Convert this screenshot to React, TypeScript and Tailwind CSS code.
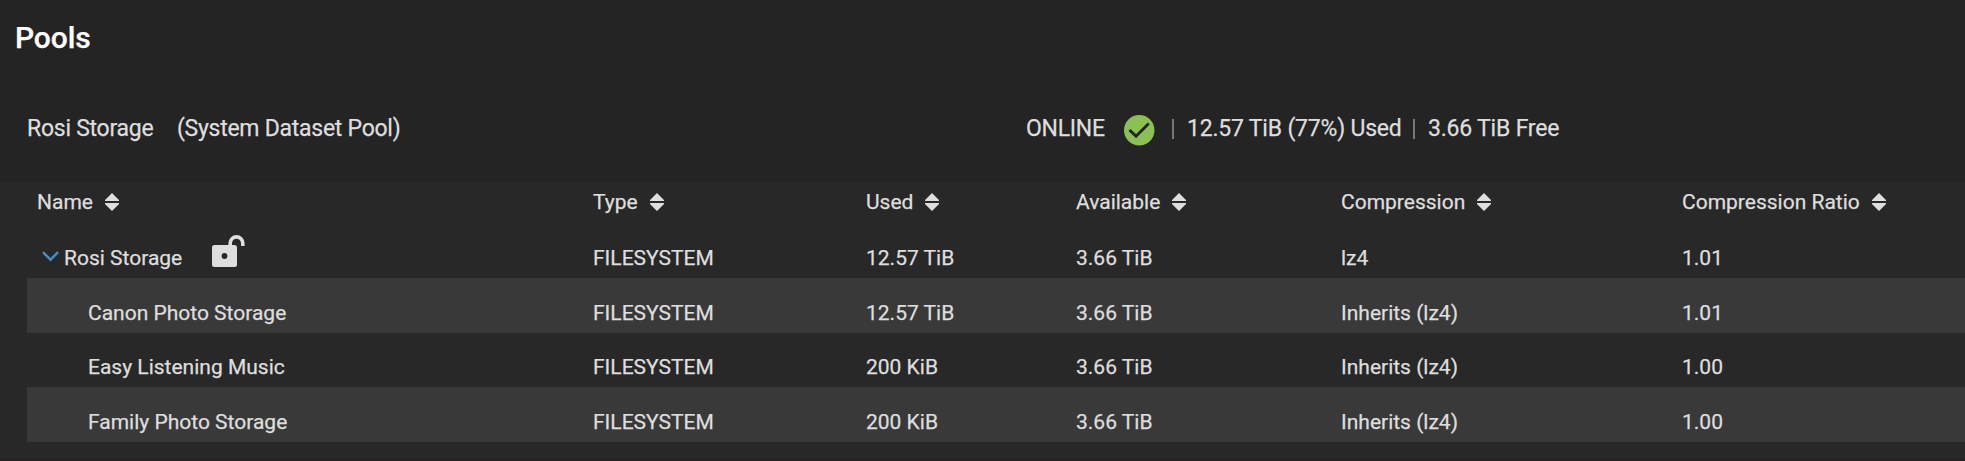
import React from "react";

const columns = ["Name", "Type", "Used", "Available", "Compression", "Compression Ratio"];

const grid = "grid grid-cols-[566px_273px_210px_265px_341px_1fr]";

type Dataset = { name: string; values: string[]; root?: boolean };

const datasets: Dataset[] = [
  { name: "Rosi Storage", values: ["FILESYSTEM", "12.57 TiB", "3.66 TiB", "lz4", "1.01"], root: true },
  { name: "Canon Photo Storage", values: ["FILESYSTEM", "12.57 TiB", "3.66 TiB", "Inherits (lz4)", "1.01"] },
  { name: "Easy Listening Music", values: ["FILESYSTEM", "200 KiB", "3.66 TiB", "Inherits (lz4)", "1.00"] },
  { name: "Family Photo Storage", values: ["FILESYSTEM", "200 KiB", "3.66 TiB", "Inherits (lz4)", "1.00"] },
];

function SortIcon() {
  return (
    <svg className="ml-3 h-[18px] w-[14px]" viewBox="0 0 14 18" fill="#dedede">
      <path d="M7 0 14 7v1H0V7zM0 10h14v1l-7 7-7-7z" />
    </svg>
  );
}

function CheckIcon() {
  return (
    <svg className="size-[30.5px]" viewBox="0 0 30 30">
      <circle cx="15" cy="15" r="15" fill="#8bc056" />
      <path d="M5.4 14.7 11.8 20.8 24.3 8.3" fill="none" stroke="#242424" strokeWidth="2.8" />
    </svg>
  );
}

function UnlockIcon() {
  return (
    <svg className="h-8 w-[33px]" viewBox="0 0 33 32">
      <path d="M18.2 11V8.2a6.3 6.3 0 0 1 12.6 0V11" fill="none" stroke="#dedede" strokeWidth="3.6" />
      <path
        fill="#dedede"
        fillRule="evenodd"
        d="M2.5 10h20a2.5 2.5 0 0 1 2.5 2.5v17a2.5 2.5 0 0 1-2.5 2.5h-20A2.5 2.5 0 0 1 0 29.5v-17A2.5 2.5 0 0 1 2.5 10ZM12.5 18a2.9 3 0 1 0 0 6 2.9 3 0 0 0 0-6Z"
      />
    </svg>
  );
}

function ChevronIcon() {
  return (
    <svg className="h-[11px] w-[17px]" viewBox="0 0 17 11" fill="none" stroke="#428fd0" strokeWidth="2.4">
      <path d="m1 1.2 7.5 7.5L16 1.2" />
    </svg>
  );
}

export default function App() {
  return (
    <div className="flex h-[461px] w-full flex-col overflow-hidden bg-[#242424] font-['Roboto',sans-serif] text-[#dedede] [-webkit-text-stroke:0.25px]">
      <h1 className="h-[85px] pt-[18px] pl-[15px] text-[30px] leading-[40px] font-medium tracking-[-0.1px] text-white">Pools</h1>
      <div className="flex h-[97px] items-start pt-[28px] text-[23px] leading-8 tracking-[-0.26px] whitespace-nowrap">
        <div className="flex w-[1026px] gap-[23.5px] pl-[27px]">
          <span>Rosi Storage</span>
          <span>(System Dataset Pool)</span>
        </div>
        <div className="flex h-8 items-center">
          <span className="w-[98px]">ONLINE</span>
          <span className="mt-[3px]"><CheckIcon /></span>
          <span className="ml-[17.5px] h-5 w-0.5 bg-[#777]" />
          <span className="ml-[13px] w-[226px] tracking-[-0.2px]">12.57 TiB (77%) Used</span>
          <span className="mr-[13px] h-5 w-0.5 bg-[#777]" />
          <span className="tracking-[-0.2px]">3.66 TiB Free</span>
        </div>
      </div>
      <div className="flex h-[277px] flex-col bg-[#282828] pl-[27px] text-[21px] leading-7">
        <div className={`${grid} h-[41px] pt-[6px]`}>
          {columns.map((column, i) => (
            <div key={column} className={i === 0 ? "flex h-7 items-center pl-[10px]" : "flex h-7 items-center"}>
              {column}
              <SortIcon />
            </div>
          ))}
        </div>
        {datasets.map((dataset, i) => (
          <div
            key={dataset.name}
            className={`${grid} ${i === 2 ? "h-[54px] pt-[20px]" : "h-[55px] pt-[21px]"} ${i % 2 ? "bg-[#393939]" : ""}`}
          >
            {dataset.root ? (
              <div className="flex h-7 items-center pl-[15px]">
                <span className="-mt-1"><ChevronIcon /></span>
                <span className="ml-[5px] w-[148px]">{dataset.name}</span>
                <span className="-mt-[14px]"><UnlockIcon /></span>
              </div>
            ) : (
              <div className="pl-[61px]">{dataset.name}</div>
            )}
            {dataset.values.map((value, j) => (
              <div key={j}>{value}</div>
            ))}
          </div>
        ))}
      </div>
      <div className="h-0.5 bg-[#272123]" />
    </div>
  );
}
